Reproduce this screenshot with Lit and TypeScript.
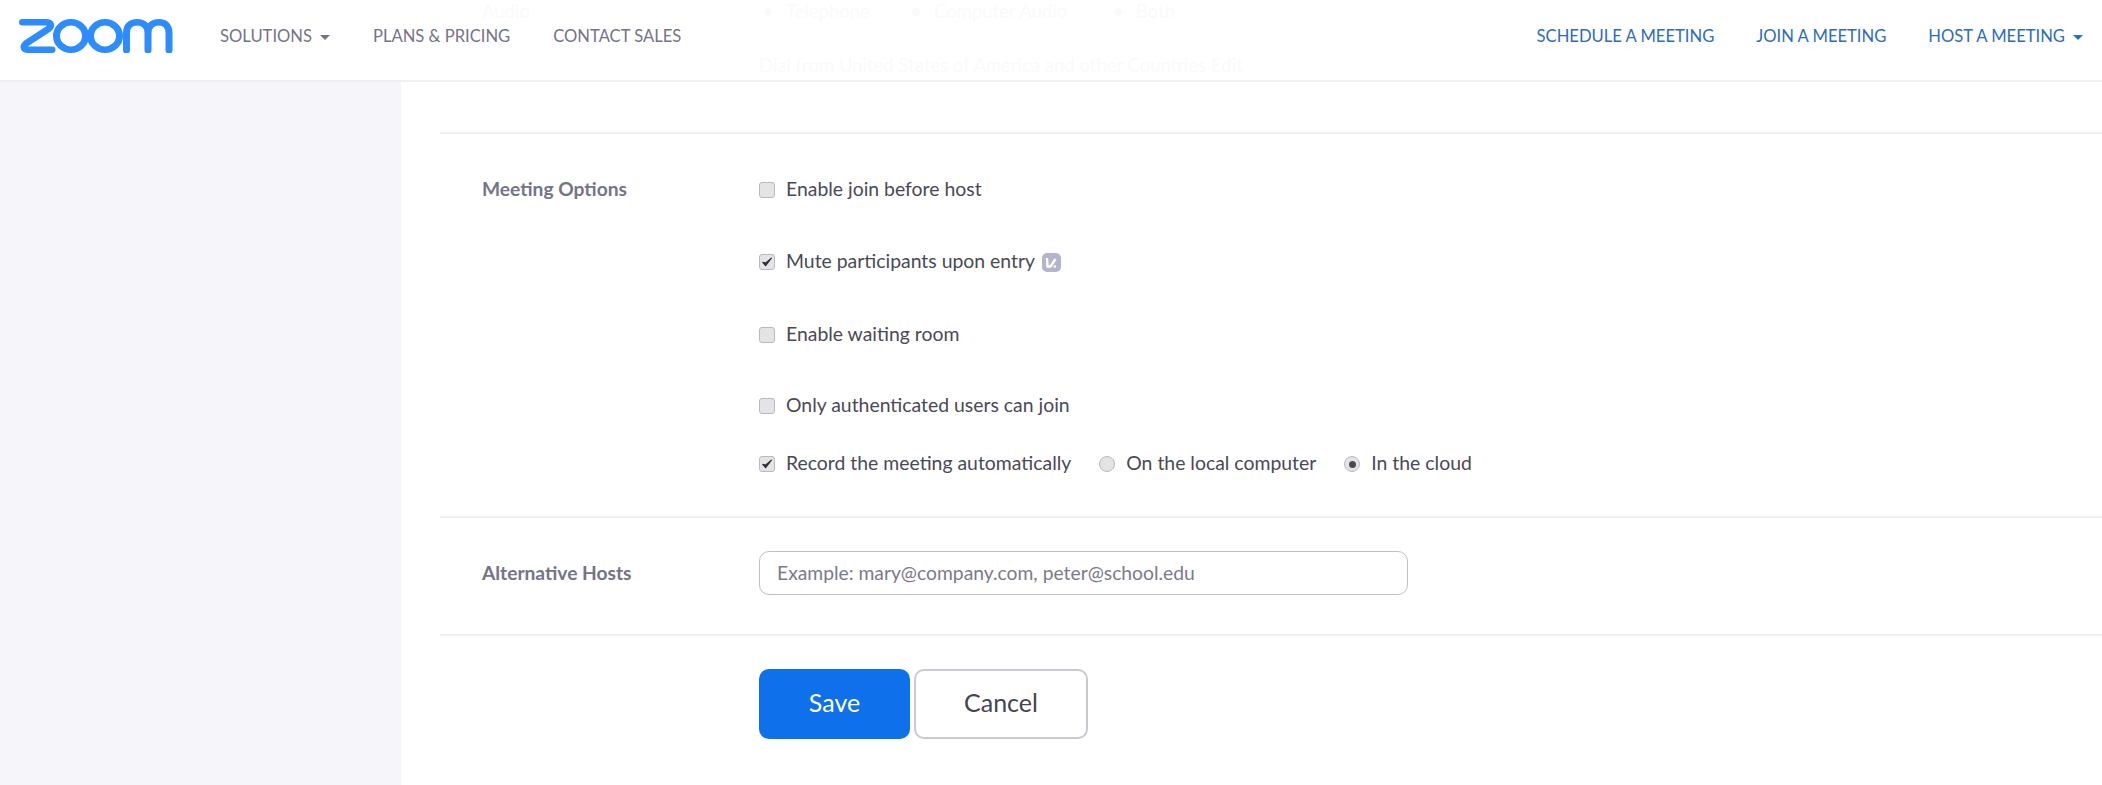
import { LitElement, html, css } from "lit";
import { customElement } from "lit/decorators.js";

@customElement("app-root")
export class AppRoot extends LitElement {
  static styles = css`
    :host { display: block; width: 100%; height: 785px; overflow: hidden; background: #fff; font-family: Lato, "Noto Sans", sans-serif; color: #4a4a55; }
    .header { position: relative; box-sizing: border-box; display: flex; align-items: flex-start; justify-content: space-between; border-bottom: 2px solid #f0f0f3; height: 82px; background: #fff; }
    .left, .right { display: flex; align-items: center; height: 72px; }
    .left { padding-left: 19px; }
    .logo { display: block; width: 154px; height: 34px; margin-right: 47px; }
    .nav { font-size: 16.6px; color: #747487; white-space: nowrap; display: flex; align-items: center; }
    .left .nav { margin-right: 43px; }
    .right { padding-right: 19px; }
    .right .nav { color: #2d6cc0; margin-left: 42px; }
    .caret { width: 0; height: 0; border-left: 5px solid transparent; border-right: 5px solid transparent; border-top: 5px solid currentColor; margin-left: 8px; margin-top: 2px; }
    .ghost { position: absolute; color: #fafafa; font-size: 18.5px; white-space: nowrap; }
    .g1 { left: 482px; top: 0; } .g2 { left: 786px; top: 0; } .g3 { left: 934px; top: 0; } .g4 { left: 1136px; top: 0; }
    .g5 { left: 759px; top: 54px; }
    .dot { position: absolute; top: 8px; width: 8px; height: 8px; border-radius: 50%; background: #fafafa; }
    .d1 { left: 764px; } .d2 { left: 912px; } .d3 { left: 1114px; }
    .body { display: flex; height: 703px; }
    .side { width: 401px; flex: none; background: #f6f6fa; }
    .main { flex: 1; padding-left: 39px; padding-top: 50px; }
    .sec { display: grid; grid-template-columns: 319px 1fr; border-top: 2px solid #f0f0f3; }
    .label { padding-left: 42px; font-size: 19.2px; font-weight: 700; color: #747487; line-height: 30px; }
    .first { padding-top: 40px; }
    .opts { padding: 41px 0 37px; display: flex; flex-direction: column; }
    .opt { display: flex; align-items: center; height: 30px; box-sizing: border-box; padding-bottom: 3px; font-size: 19.4px; white-space: nowrap; }
    .o2 { margin-top: 42px; } .o3 { margin-top: 43px; } .o4 { margin-top: 41px; } .o5 { margin-top: 28px; }
    .cb { width: 16px; height: 16px; box-sizing: border-box; background: #e4e4e6; border: 1px solid #b9b9bf; border-radius: 3px; margin: 3px 11px 0 0; display: flex; align-items: center; justify-content: center; flex: none; }
    .cb svg { width: 12px; height: 12px; display: block; }
    .rb { width: 16px; height: 16px; box-sizing: border-box; background: #e4e4e6; border: 1px solid #b9b9bf; border-radius: 50%; margin: 3px 11px 0 28px; display: flex; align-items: center; justify-content: center; flex: none; }
    .rb i { display: block; width: 7px; height: 7px; border-radius: 50%; background: #4a4a55; }
    .info { width: 19px; height: 19px; margin: 3px 0 0 7px; display: block; }
    .altlabel { padding-top: 33px; line-height: 44px; }
    .altbox { padding: 33px 0 39px; }
    .input { width: 649px; height: 44px; box-sizing: border-box; border: 1px solid #bfbfca; border-radius: 10px; padding: 0 0 2px 17px; display: flex; align-items: center; font-size: 19.3px; color: #7b7b88; white-space: nowrap; }
    .buttons { grid-column: 2; padding-top: 33px; display: flex; gap: 4px; }
    .btn { height: 70px; box-sizing: border-box; border-radius: 10px; display: flex; align-items: center; justify-content: center; font-size: 25px; padding-bottom: 5px; }
    .save { width: 151px; background: #0e71eb; color: #fff; }
    .cancel { width: 174px; background: #fff; border: 2px solid #c9c9d2; color: #45454f; }
  `;

  private check() {
    return html`<svg viewBox="0 0 12 12"><path d="M1.8 6.4 L4.6 9.6 L10.4 2.2 L4.8 7 Z" fill="#2f2f36" stroke="#2f2f36" stroke-width="1.2" stroke-linejoin="round"/></svg>`;
  }

  render() {
    return html`
      <div class="header">
        <span class="ghost g1">Audio</span>
        <span class="dot d1"></span><span class="ghost g2">Telephone</span>
        <span class="dot d2"></span><span class="ghost g3">Computer Audio</span>
        <span class="dot d3"></span><span class="ghost g4">Both</span>
        <span class="ghost g5">Dial from United States of America and other Countries Edit</span>
        <div class="left">
          <svg class="logo" viewBox="0 0 154 36" preserveAspectRatio="none" fill="none" stroke="#2d8cff" stroke-width="7">
            <path d="M3.5 3.5 H27 C32 3.5 33 7 30 10 L7 26 C3.5 29.500 5 32.500 9 32.500 H33" stroke-linecap="round" stroke-linejoin="round"/>
            <circle cx="52" cy="18" r="14.500"/>
            <circle cx="86" cy="18" r="14.500"/>
            <path d="M107.500 33 V15 C107.500 7 112 3.500 118 3.500 C125 3.500 129 8 129 15 V33 M129 15 C129 8 133 3.500 140 3.500 C146 3.500 150 7 150 15 V33" stroke-linecap="round"/>
          </svg>
          <span class="nav">SOLUTIONS<span class="caret"></span></span>
          <span class="nav">PLANS &amp; PRICING</span>
          <span class="nav">CONTACT SALES</span>
        </div>
        <div class="right">
          <span class="nav">SCHEDULE A MEETING</span>
          <span class="nav">JOIN A MEETING</span>
          <span class="nav">HOST A MEETING<span class="caret"></span></span>
        </div>
      </div>
      <div class="body">
        <div class="side"></div>
        <div class="main">
          <div class="sec">
            <div class="label first">Meeting Options</div>
            <div class="opts">
              <div class="opt"><span class="cb"></span>Enable join before host</div>
              <div class="opt o2"><span class="cb">${this.check()}</span>Mute participants upon entry
                <svg class="info" viewBox="0 0 19 19"><rect width="19" height="19" rx="5" fill="#b4b4cf"/><path d="M5 5 L5.500 13.500 L8.500 13.500 L13.500 6" fill="none" stroke="#fff" stroke-width="2.400"/><path d="M11.500 13.500 h2.500" stroke="#fff" stroke-width="2"/></svg>
              </div>
              <div class="opt o3"><span class="cb"></span>Enable waiting room</div>
              <div class="opt o4"><span class="cb"></span>Only authenticated users can join</div>
              <div class="opt o5"><span class="cb">${this.check()}</span>Record the meeting automatically
                <span class="rb"></span>On the local computer
                <span class="rb"><i></i></span>In the cloud
              </div>
            </div>
          </div>
          <div class="sec">
            <div class="label altlabel">Alternative Hosts</div>
            <div class="altbox"><div class="input">Example: mary@company.com, peter@school.edu</div></div>
          </div>
          <div class="sec">
            <div class="buttons">
              <div class="btn save">Save</div>
              <div class="btn cancel">Cancel</div>
            </div>
          </div>
        </div>
      </div>
    `;
  }
}
